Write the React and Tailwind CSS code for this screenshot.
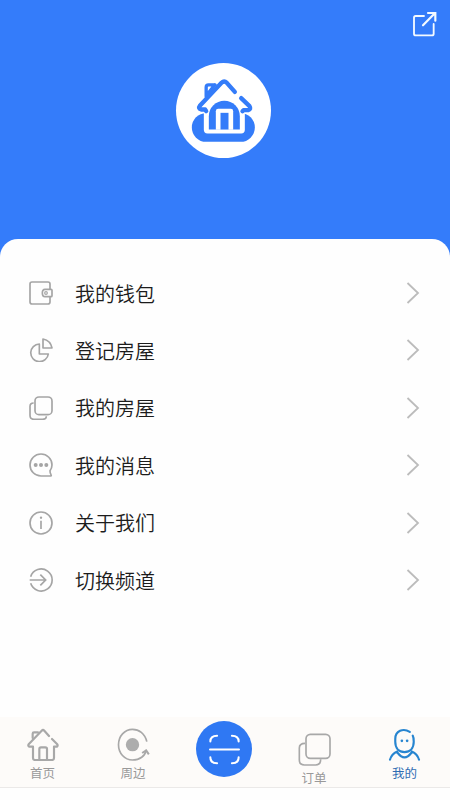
import React from 'react';

const Logo = () => (
  <svg viewBox="33.5 37.5 285 285" className="h-[95px] w-[95px]" fill="none">
    <rect x="81" y="188" width="189" height="86" rx="43" fill="#347cf9" />
    <path d="M117 180v58q0 11 11 11h101q11 0 11-11v-58z" fill="#fff" />
    <path d="M132 237v-40a46.500 46.500 0 0 1 93 0v40z" fill="#347cf9" />
    <path d="M153 238v-56q0-7 7-7h38q7 0 7 7v56z" fill="#fff" />
    <path d="M167 187h24v50h-24z" fill="#347cf9" />
    <g stroke="#347cf9" strokeWidth="13" strokeLinecap="round" strokeLinejoin="round">
      <path d="M124 182l-3-5h-12q-10-3-4-11l65-69q8-8 16 0l24 27" />
      <path d="M124 138v-28q0-7 7-7h20M150 103l-20 25" strokeWidth="10" />
      <path d="M229 143l25 24q6 9-4 12h-14l-3 3" />
    </g>
  </svg>
);

const ShareIcon = () => (
  <svg viewBox="36 33 75 78" className="h-[26px] w-[25px]" fill="none" stroke="#f4faff" strokeWidth="5.500" strokeLinecap="round">
    <path d="M72 48H47q-5 0-5 5v48q0 5 5 5h49q5 0 5-5V72" />
    <path d="M69 76l34-35M84 39h22v23" strokeWidth="6.500" />
  </svg>
);

const WalletIcon = () => (
  <>
    <path d="M63 25V9q0-6-6-6H9Q3 3 3 9v54q0 6 6 6h48q6 0 6-6V47" />
    <path d="M48 25h18q3 0 3 3v16q0 3-3 3H48q-8 0-8-11t8-11z" />
    <circle cx="51" cy="36" r="4" strokeWidth="3.500" />
  </>
);

const PieIcon = () => (
  <>
    <path d="M31 18a26.500 26.500 0 1 0 27 30H31z" strokeLinejoin="round" />
    <path d="M42 3v27h27Q65 8 42 3z" strokeLinejoin="round" />
  </>
);

const CopyIcon = () => (
  <>
    <rect x="18" y="3" width="51" height="53" rx="12" />
    <path d="M14 21q-11 0-11 10v27q0 12 12 12h25q12 0 12-9" />
  </>
);

const MessageIcon = () => (
  <>
    <path d="M63 53q6-8 6-17a33 33 0 1 0-33 33h29q3-1 1-4-3-5-3-12z" strokeLinejoin="round" />
    <g fill="#a5a5a5" stroke="none">
      <circle cx="20" cy="36" r="6" />
      <circle cx="36" cy="36" r="6" />
      <circle cx="52" cy="36" r="6" />
    </g>
  </>
);

const InfoIcon = () => (
  <>
    <circle cx="36" cy="36" r="33" />
    <path d="M36 29v25" strokeWidth="5" />
    <circle cx="36" cy="20" r="3.500" fill="#a5a5a5" stroke="none" />
  </>
);

const SwitchIcon = () => (
  <>
    <path d="M5 26a33 33 0 1 1 0 20" />
    <path d="M2 36h47M34 20l16 16-16 16" />
  </>
);

const menu = [
  { label: '我的钱包', Icon: WalletIcon },
  { label: '登记房屋', Icon: PieIcon },
  { label: '我的房屋', Icon: CopyIcon },
  { label: '我的消息', Icon: MessageIcon },
  { label: '关于我们', Icon: InfoIcon },
  { label: '切换频道', Icon: SwitchIcon },
];

const MenuRow = ({ label, Icon }) => (
  <li className="flex h-[57.4px] items-center pl-[29px] pr-[30px]">
    <svg viewBox="0 0 72 72" className="h-6 w-6" fill="none" stroke="#a5a5a5" strokeWidth="5">
      <Icon />
    </svg>
    <span className="ml-[22px] flex-1 pt-px text-[20px] font-[350] leading-none text-[#1c1c1c]">{label}</span>
    <svg viewBox="0 0 14 22" className="h-[22px] w-[14px]" fill="none" stroke="#bcbcbc" strokeWidth="1.800">
      <path d="M1.500 1l10.500 10-10.500 10" />
    </svg>
  </li>
);

const HomeTab = () => (
  <svg viewBox="80 68 96 99" className="h-[33px] w-8" fill="none" stroke="#a8a8a8" strokeWidth="6.500" strokeLinecap="round" strokeLinejoin="round">
    <path d="M98 124v34q0 6 6 6h51q6 0 6-6v-34h9q4-3 0-8l-15-15M146 92l-14-16q-4-4-8 0l-39 41q-3 5 2 7h11" />
    <path d="M97 98V85q0-4 4-4h12M117 162v-31q0-5 5-5h13q5 0 5 5v31" />
  </svg>
);

const NearbyTab = () => (
  <svg viewBox="351 68 98 99" className="h-[33px] w-[33px]" fill="none" stroke="#a8a8a8" strokeWidth="5">
    <path d="M440 109C434 84 416 72 397 72c-24 0-42 21-42 46s18 46 42 46c22 0 38-12 41-30" />
    <path d="M426 143l12-8 8 12" strokeWidth="6" />
    <circle cx="397" cy="118" r="20" fill="#adadad" stroke="none" />
  </svg>
);

const OrderTab = () => (
  <svg viewBox="53 84 99 99" className="h-[33px] w-[33px]" fill="none" stroke="#a8a8a8" strokeWidth="5">
    <rect x="77" y="88" width="72" height="72" rx="13" />
    <path d="M74 115q-17 0-17 14v36q0 15 15 15h34q15 0 15-17" />
  </svg>
);

const MineTab = () => (
  <svg viewBox="325 67 98 100" className="h-[33px] w-[33px]" fill="none" stroke="#2785d0" strokeWidth="6.500" strokeLinecap="round">
    <path d="M390 79c-20-13-44-3-44 21v9c0 20 12 31 28 31s28-11 28-31c0-8 0-14-3-19" />
    <path d="M352 138q-17 7-22 25M396 138q17 7 22 25M353 142q21 28 42 0" />
    <g fill="#2785d0" stroke="none">
      <circle cx="366" cy="106" r="4" />
      <circle cx="382" cy="106" r="4" />
    </g>
  </svg>
);

const ScanIcon = () => (
  <svg viewBox="86 85 92 92" className="h-[31px] w-[31px]" fill="none" stroke="#fff" strokeWidth="6" strokeLinecap="round">
    <path d="M90 107q0-17 20-17M154 90q20 0 20 17M90 154q0 18 20 18M154 172q20 0 20-18M89 131h86" />
  </svg>
);

const App = () => (
  <div className="flex h-[800px] w-[450px] flex-col overflow-hidden bg-[#347cfa] font-['Noto_Sans_CJK_SC',sans-serif]">
    <header className="flex h-[239px] shrink-0 flex-col">
      <div className="flex justify-end pr-[13px] pt-[11px]">
        <ShareIcon />
      </div>
      <div className="mt-[26px] flex justify-center pr-[3px]">
        <div className="h-[95px] w-[95px] rounded-full bg-white">
          <Logo />
        </div>
      </div>
    </header>

    <main className="flex flex-1 flex-col rounded-t-[18px] bg-[#fefefe]">
      <ul className="h-[478px] pt-[25.4px]">
        {menu.map((item) => (
          <MenuRow key={item.label} {...item} />
        ))}
      </ul>

      <nav className="flex h-[71px] border-b border-[#ebe9e8] bg-[#fdfbf9] text-[12.500px] leading-none text-[#999]">
        <div className="flex w-[85px] flex-col items-center gap-[6px] pt-[11px]">
          <HomeTab />
          <span>首页</span>
        </div>
        <div className="flex w-[96px] flex-col items-center gap-[6px] pt-[11px]">
          <NearbyTab />
          <span>周边</span>
        </div>
        <div className="flex w-[86px] justify-center pt-1">
          <div className="flex h-14 w-14 items-center justify-center rounded-full bg-[#2f78f3]">
            <ScanIcon />
          </div>
        </div>
        <div className="flex w-[94px] flex-col items-center gap-[6px] pt-4">
          <OrderTab />
          <span>订单</span>
        </div>
        <div className="flex w-[87px] flex-col items-center gap-[6px] pt-[11px] text-[#2f6cb3]">
          <MineTab />
          <span>我的</span>
        </div>
      </nav>
    </main>
  </div>
);

export default App;
